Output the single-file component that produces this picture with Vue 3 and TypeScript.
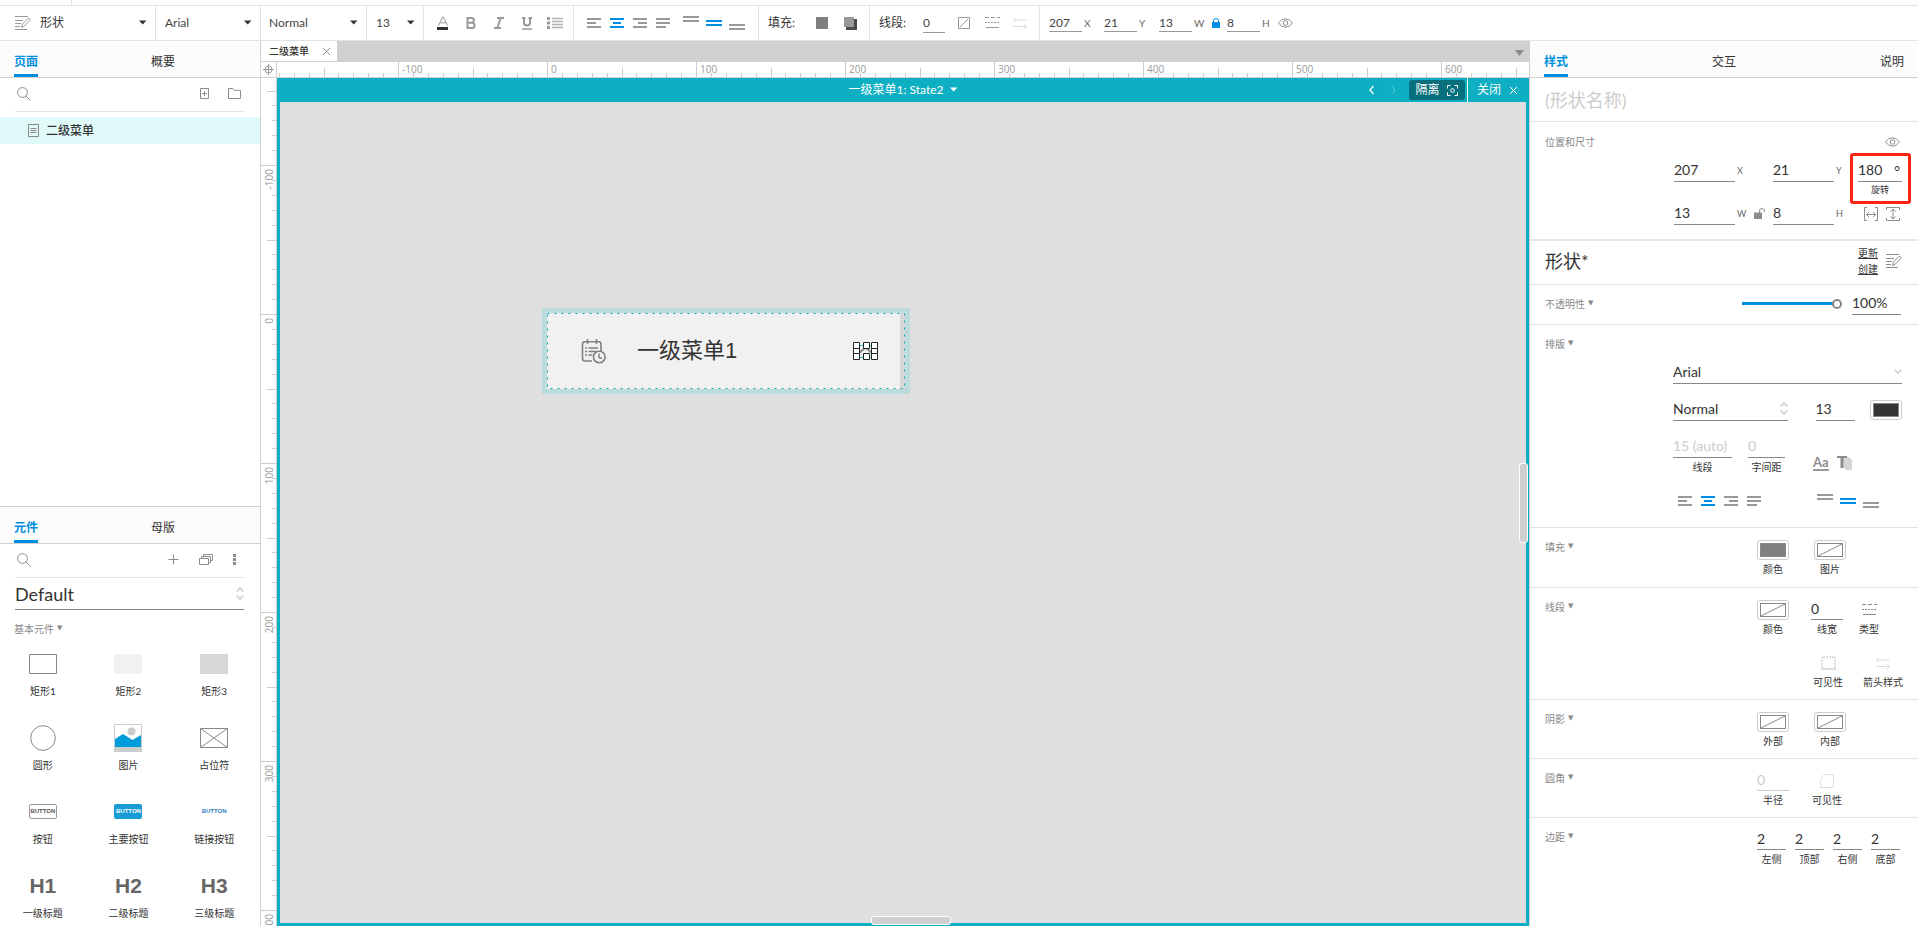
<script setup lang="ts">
import { computed, h, onBeforeUnmount, onMounted, ref, type FunctionalComponent } from 'vue'

interface Glyph { w: number; h: number; body: string }

const line = (d: string, width = 1, color = 'currentColor') =>
  `<path d="${d}" fill="none" stroke="${color}" stroke-width="${width}"/>`
const solid = (d: string) => `<path d="${d}" fill="currentColor"/>`

const glyphs: Record<string, Glyph> = {
  caret: { w: 8, h: 5, body: solid('M0 0.5h7.4L3.7 4.6z') },
  menu: { w: 9, h: 6, body: solid('M0 0h9L4.5 6z') },
  style: { w: 16, h: 14, body: line('M0 0.5h13M0 4.5h8M0 7.5h6M0 10.5h5M0 13.5h12') + line('M6.5 11.5l1-3.6 5-5q1-1 2-.2t0 2l-5 5.2z') },
  fontColor: { w: 12, h: 14, body: line('M1.5 9.5L5.6 1h.8l4.1 8.5M3 6.8h6') + '<path d="M0 11h11v3H0z" fill="#333"/>' },
  bold: { w: 10, h: 12, body: line('M1.5 1h4a2.3 2.3 0 0 1 0 4.8h-4zM1.5 5.8h4.4a2.5 2.5 0 0 1 0 5.2H1.5z', 2) },
  italic: { w: 10, h: 12, body: line('M3 1h7M0 11h7M6.5 1L3.5 11', 2) },
  underline: { w: 10, h: 13, body: line('M0 1h3.5M6.5 1H10M2 1v4.5a3 3 0 0 0 6 0V1', 2) + line('M0 12h10', 1.5) },
  list: { w: 16, h: 12, body: solid('M0 0h3v3H0zM0 4.5h3v3H0zM0 9h3v3H0z') + '<path d="M5 1.5h11M5 4.5h11M5 7.5h11M5 10.5h11" stroke="currentColor" stroke-width="1.5" opacity=".75"/>' },
  alignLeft: { w: 14, h: 10, body: solid('M0 0h14v2H0zM0 4h9v2H0zM0 8h14v2H0z') },
  alignCenter: { w: 14, h: 10, body: solid('M0 0h14v2H0zM3 4h8v2H3zM0 8h14v2H0z') },
  alignRight: { w: 14, h: 10, body: solid('M0 0h14v2H0zM5 4h9v2H5zM0 8h14v2H0z') },
  justify: { w: 14, h: 10, body: solid('M0 0h14v2H0zM0 4h14v2H0zM0 8h10v2H0z') },
  vTop: { w: 16, h: 14, body: solid('M0 0h16v2H0zM0 4h16v2H0z') },
  vMiddle: { w: 16, h: 14, body: solid('M0 4h16v2H0zM0 8h16v2H0z') },
  vBottom: { w: 16, h: 14, body: solid('M0 8h16v2H0zM0 12h16v2H0z') },
  fill: { w: 12, h: 12, body: '<path d="M0 0h12v12H0z" fill="#7f7f7f"/>' },
  shadow: { w: 13, h: 13, body: '<path d="M2 2h11v11H2z" fill="#4a4a4a"/><path d="M0 0h10v10H0z" fill="#999"/>' },
  noLine: { w: 12, h: 12, body: line('M.5 .5h11v11H.5zM2 10l8-8') },
  lineType: { w: 15, h: 12, body: line('M0 .5h4M6 .5h4M12 .5h3M0 5.5h2M3 5.5h2M6 5.5h2M9 5.5h2M12 5.5h2M1 10.5h13') },
  arrows: { w: 14, h: 12, body: line('M.5 3h13M3 .5L.5 3 3 5.5M0 9.5h13M11 7l2.5 2.5L11 12') },
  lock: { w: 8, h: 10, body: solid('M0 4h8v6H0z') + line('M1.5 4.5V3a2.5 2.5 0 0 1 5 0v1.5') },
  unlock: { w: 11, h: 12, body: solid('M0 4.5h8v6.5H0z') + line('M5.5 5V3a2.4 2.4 0 0 1 4.9 0v1') },
  eye: { w: 15, h: 10, body: line('M.5 5Q3.5 .8 7.5 .8T14.5 5Q11.5 9.2 7.5 9.2T.5 5z') + '<circle cx="7.5" cy="5" r="2.3" fill="none" stroke="currentColor"/>' },
  search: { w: 14, h: 14, body: '<circle cx="5.5" cy="5.5" r="4.9" fill="none" stroke="currentColor"/>' + line('M9 9l4.5 4.5') },
  addPage: { w: 9, h: 11, body: line('M.5 .5h8v10h-8zM2 5.5h5M4.5 3v5') },
  folder: { w: 13, h: 11, body: line('M.5 10.5V.5h4.2l1.5 1.8h6.3v8.2z') },
  page: { w: 11, h: 13, body: line('M.5 .5h10v12H.5zM2.5 4.5h6M2.5 6.5h6M2.5 8.5h6') },
  plus: { w: 11, h: 11, body: line('M5.5 .5v10M.5 5.5h10') },
  stack: { w: 14, h: 11, body: line('M.5 4.5h9v6h-9zM2.5 4.5v-2h9v6h-2M4.5 2.5v-2h9v6h-2') },
  more: { w: 3, h: 11, body: solid('M0 0h3v3H0zM0 4h3v3H0zM0 8h3v3H0z') },
  updown: { w: 8, h: 13, body: line('M.7 4.5L4 1l3.3 3.5M.7 8.5L4 12l3.3-3.5', 1.5) },
  down: { w: 8, h: 5, body: line('M.7 .8L4 4 7.3 .8', 1.5) },
  target: { w: 11, h: 11, body: '<circle cx="5.5" cy="5.5" r="3.5" fill="none" stroke="currentColor"/>' + line('M5.5 0v11M0 5.5h11') },
  close: { w: 9, h: 9, body: line('M1 1l7 7M8 1L1 8') },
  prev: { w: 6, h: 10, body: line('M4.5 1L1 5l3.5 4', 1.3) },
  next: { w: 6, h: 10, body: line('M1.5 1L5 5 1.5 9') },
  isolate: { w: 11, h: 11, body: line('M3.5 .5h-3v3M7.5 .5h3v3M.5 7.5v3h3M10.5 7.5v3h-3') + '<circle cx="5.5" cy="5.5" r="1.8" fill="none" stroke="currentColor"/>' },
  fitWidth: { w: 14, h: 14, body: line('M3 .5H.5v13H3M11 .5h2.5v13H11M2 7.5h10M5 5L2.5 7.5 5 10M9 5l2.5 2.5L9 10') },
  fitHeight: { w: 14, h: 14, body: line('M.5 3V.5h13V3M.5 11v2.5h13V11M7 2v10M4.5 4.5L7 2l2.5 2.5M4.5 9.5L7 12l2.5-2.5') },
  textShadow: { w: 15, h: 14, body: '<path d="M6 1h6l3 3v10H9l-2-2z" fill="#d5d5d5"/>' + solid('M0 0h10v2H6.5v10H3.5V2H0z') },
  borders: { w: 15, h: 14, body: '<path d="M1 12V1h13v11" fill="none" stroke="currentColor" stroke-width="2" stroke-dasharray="2 1"/>' + solid('M0 12h15v2H0z') },
  corner: { w: 14, h: 14, body: line('M.5 13.5V8Q.5 .5 8 .5h5.5v13z') },
  rect: { w: 28, h: 20, body: line('M.5 .5h27v19H.5z') },
  rectLight: { w: 28, h: 20, body: '<path d="M0 0h28v20H0z" fill="#f2f2f2"/>' },
  rectDark: { w: 28, h: 20, body: '<path d="M0 0h28v20H0z" fill="#d7d7d7"/>' },
  circle: { w: 26, h: 26, body: '<circle cx="13" cy="13" r="12.3" fill="none" stroke="currentColor"/>' },
  image: { w: 28, h: 28, body: '<path d="M0 0h28v28H0z" fill="#ccc"/><path d="M1 1h26v22H1z" fill="#fff"/><circle cx="17.5" cy="7.5" r="4" fill="#ccc"/><path d="M1 15l8-5 9.5 6 8.5-5v12H1z" fill="#009ddc"/>' },
  placeholder: { w: 28, h: 20, body: line('M.5 .5h27v19H.5zM.5 .5l27 19M27.5 .5l-27 19') },
  schedule: {
    w: 25, h: 25,
    body: '<path d="M11 22H4q-2.5 0-2.5-2.5V5Q1.5 2.7 4 2.7h14q2 0 2 2.3v7" fill="none" stroke="currentColor" stroke-width="1.6"/>' +
      line('M6.5 0v5M15.5 0v5M7.5 9h9.5M7.5 12.5h8M7.5 16h4', 1.5) + solid('M4 8.3h2v1.5H4zM4 11.8h2v1.5H4zM4 15.3h2v1.5H4z') +
      '<circle cx="18.3" cy="18" r="5.8" fill="none" stroke="currentColor" stroke-width="1.6"/>' + line('M18 14.5v4l3 1', 1.5),
  },
  selection: {
    w: 25, h: 18,
    body: line('M4 3.5h17v12H4z', 1, '#18c8cc') + line('M6 11l6.5-5.5L19 11', 2, '#888') +
      '<g fill="#fff" stroke="#222"><path d="M.5 .5h6v6h-6zM.5 6.5h6v5h-6zM.5 11.5h6v6h-6zM10.5 .5h6v6h-6zM10.5 11.5h6v6h-6zM18.5 .5h6v6h-6zM18.5 6.5h6v5h-6zM18.5 11.5h6v6h-6z"/></g>',
  },
}

const Icon: FunctionalComponent<{ name: string }> = (props) => {
  const g = glyphs[props.name]
  return h('svg', { width: g.w, height: g.h, viewBox: `0 0 ${g.w} ${g.h}`, 'aria-hidden': 'true', innerHTML: g.body })
}
Icon.props = ['name']

const textTools = [
  ['fontColor', '文字颜色'], ['bold', '粗体'], ['italic', '斜体'], ['underline', '下划线'], ['list', '项目符号'],
]
const hAligns = [
  ['alignLeft', '左对齐'], ['alignCenter', '居中'], ['alignRight', '右对齐'], ['justify', '两端对齐'],
]
const vAligns = [
  ['vTop', '顶部对齐'], ['vMiddle', '垂直居中'], ['vBottom', '底部对齐'],
]
const hAlign = ref('alignCenter')
const vAlign = ref('vMiddle')

const x = ref('207')
const y = ref('21')
const w = ref('13')
const ht = ref('8')
const size = ref('13')
const rotation = ref('180')
const opacity = ref(100)
const lineWidth = ref('0')
const paddings = ref([
  { label: '左侧', value: '2' }, { label: '顶部', value: '2' }, { label: '右侧', value: '2' }, { label: '底部', value: '2' },
])

interface Widget { label: string; icon?: string; button?: string; heading?: string }
const widgets: Widget[] = [
  { label: '矩形1', icon: 'rect' }, { label: '矩形2', icon: 'rectLight' }, { label: '矩形3', icon: 'rectDark' },
  { label: '圆形', icon: 'circle' }, { label: '图片', icon: 'image' }, { label: '占位符', icon: 'placeholder' },
  { label: '按钮', button: 'plain' }, { label: '主要按钮', button: 'primary' }, { label: '链接按钮', button: 'link' },
  { label: '一级标题', heading: 'H1' }, { label: '二级标题', heading: 'H2' }, { label: '三级标题', heading: 'H3' },
]

/* Ruler marks: one every 10 units at 149% zoom, as far as the frame reaches. */
const frame = ref<HTMLElement | null>(null)
const frameWidth = ref(0)
const frameHeight = ref(0)
const marks = (origin: number, length: number) => {
  const first = Math.ceil(-origin / 14.9)
  const last = Math.floor((length - 2) / 14.9 - origin / 14.9)
  return Array.from({ length: Math.max(0, last - first + 1) }, (_, i) => {
    const k = first + i
    return { pos: Math.round(origin + k * 14.9), label: k % 10 === 0 ? String(k * 10) : '', start: k % 10 === 0 ? 0 : k % 5 === 0 ? 6 : 11 }
  })
}
const hMarks = computed(() => marks(270, frameWidth.value))
const vMarks = computed(() => marks(236, frameHeight.value))

const measure = () => {
  frameWidth.value = frame.value?.offsetWidth ?? 0
  frameHeight.value = frame.value?.offsetHeight ?? 0
}
onMounted(() => {
  measure()
  window.addEventListener('resize', measure)
})
onBeforeUnmount(() => window.removeEventListener('resize', measure))
</script>

<template>
  <div class="app">
    <div class="menu-edge"><span></span></div>
    <header class="toolbar">
      <div class="group g-style">
        <Icon name="style" />
        <label class="pick"><select aria-label="样式"><option>形状</option></select><Icon name="caret" class="pick-caret" /></label>
      </div>
      <div class="group g-font"><label class="pick"><select aria-label="字体"><option>Arial</option></select><Icon name="caret" class="pick-caret" /></label></div>
      <div class="group g-weight"><label class="pick"><select aria-label="字形"><option>Normal</option></select><Icon name="caret" class="pick-caret" /></label></div>
      <div class="group g-size"><label class="pick"><select aria-label="字号"><option>13</option></select><Icon name="caret" class="pick-caret" /></label></div>
      <div class="group g-text">
        <button v-for="[n, t] in textTools" :key="n" class="tool" :aria-label="t"><Icon :name="n" /></button>
      </div>
      <div class="group g-align">
        <button v-for="[n, t] in hAligns" :key="n" class="align" :class="{ on: hAlign === n }" :aria-label="t" @click="hAlign = n"><Icon :name="n" /></button>
        <span class="split"></span>
        <button v-for="[n, t] in vAligns" :key="n" class="align" :class="{ on: vAlign === n }" :aria-label="t" @click="vAlign = n"><Icon :name="n" /></button>
      </div>
      <div class="group g-fill">
        <span class="caption">填充:</span>
        <button class="tool" aria-label="填充颜色"><Icon name="fill" /></button>
        <button class="tool" aria-label="阴影"><Icon name="shadow" /></button>
      </div>
      <div class="group g-line">
        <label class="caption" for="tb-line">线段:</label>
        <input id="tb-line" v-model="lineWidth" class="mini narrow">
        <span class="split"></span>
        <button class="tool" aria-label="线段颜色"><Icon name="noLine" /></button>
        <button class="tool" aria-label="线段类型"><Icon name="lineType" /></button>
        <button class="tool faint" aria-label="箭头样式" disabled><Icon name="arrows" /></button>
      </div>
      <div class="group g-pos">
        <input id="tb-x" v-model="x" class="mini"><label class="axis" for="tb-x">X</label>
        <input id="tb-y" v-model="y" class="mini"><label class="axis" for="tb-y">Y</label>
        <input id="tb-w" v-model="w" class="mini"><label class="axis short" for="tb-w">W</label>
        <button class="lock" aria-label="锁定比例"><Icon name="lock" /></button>
        <input id="tb-h" v-model="ht" class="mini"><label class="axis" for="tb-h">H</label>
        <button class="bare" aria-label="可见"><Icon name="eye" /></button>
      </div>
    </header>

    <main class="work">
      <aside class="left">
        <section class="pages">
          <nav class="tabs"><button class="tab active">页面</button><button class="tab">概要</button></nav>
          <div class="finder">
            <button class="bare" aria-label="搜索页面"><Icon name="search" /></button>
            <span class="finder-tools p-tools">
              <button class="bare" aria-label="添加页面"><Icon name="addPage" /></button>
              <button class="bare" aria-label="添加文件夹"><Icon name="folder" /></button>
            </span>
          </div>
          <a class="page-row" href="#page"><Icon name="page" />二级菜单</a>
        </section>
        <section class="library">
          <nav class="tabs"><button class="tab active">元件</button><button class="tab">母版</button></nav>
          <div class="finder">
            <button class="bare" aria-label="搜索元件"><Icon name="search" /></button>
            <span class="finder-tools l-tools">
              <button class="bare" aria-label="添加元件库"><Icon name="plus" /></button>
              <button class="bare" aria-label="元件库"><Icon name="stack" /></button>
              <button class="bare" aria-label="更多"><Icon name="more" /></button>
            </span>
          </div>
          <label class="pick lib-pick"><select aria-label="元件库选择"><option>Default</option></select><Icon name="updown" class="pick-arrow" /></label>
          <button class="lib-title">基本元件<span class="tri">▼</span></button>
          <ul class="widgets">
            <li v-for="item in widgets" :key="item.label">
              <span class="thumb">
                <Icon v-if="item.icon" :name="item.icon" />
                <span v-else-if="item.button" class="sample" :class="item.button">BUTTON</span>
                <b v-else>{{ item.heading }}</b>
              </span>
              <span class="w-label">{{ item.label }}</span>
            </li>
          </ul>
        </section>
      </aside>

      <section class="canvas">
        <div class="files">
          <div class="file">二级菜单<button class="bare" aria-label="关闭标签"><Icon name="close" /></button></div>
          <button class="bare files-menu" aria-label="标签列表"><Icon name="menu" /></button>
        </div>
        <div class="ruler-h">
          <span class="origin"><Icon name="target" /></span>
          <svg class="scale-h" aria-hidden="true">
            <g v-for="m in hMarks" :key="m.pos">
              <rect :x="m.pos" :y="m.start" width="1" :height="15 - m.start" />
              <text v-if="m.label" :x="m.pos + 4" y="11">{{ m.label }}</text>
            </g>
          </svg>
        </div>
        <div class="below">
          <svg class="scale-v" aria-hidden="true">
            <g v-for="m in vMarks" :key="m.pos">
              <rect :x="m.start" :y="m.pos" :width="15 - m.start" height="1" />
              <text v-if="m.label" text-anchor="end" :transform="`translate(12 ${m.pos + 4}) rotate(-90)`">{{ m.label }}</text>
            </g>
          </svg>
          <div ref="frame" class="frame">
            <div class="state-bar">
              <span></span>
              <button class="state">一级菜单1: State2<Icon name="caret" /></button>
              <span class="state-tools">
                <button class="bare" aria-label="上一个状态"><Icon name="prev" /></button>
                <button class="bare dim" aria-label="下一个状态"><Icon name="next" /></button>
                <button class="isolate">隔离<Icon name="isolate" /></button>
                <button class="shut">关闭<Icon name="close" /></button>
              </span>
            </div>
            <div class="stage">
              <div class="halo">
                <div class="item">
                  <Icon name="schedule" class="item-icon" />
                  <span class="item-text">一级菜单1</span>
                  <Icon name="selection" class="item-arrow" />
                </div>
                <svg class="dots" aria-hidden="true"><rect x="0.5" y="0.5" width="357" height="75" /></svg>
              </div>
            </div>
            <span class="bar-v"></span>
            <span class="bar-h"></span>
          </div>
        </div>
      </section>

      <aside class="right">
        <nav class="tabs spread"><button class="tab active">样式</button><button class="tab">交互</button><button class="tab">说明</button></nav>
        <input class="name" placeholder="(形状名称)" aria-label="形状名称">

        <section class="place">
          <div class="place-head"><h2>位置和尺寸</h2><button class="bare" aria-label="可见性"><Icon name="eye" /></button></div>
          <div class="place-grid">
            <input id="px" v-model="x"><label for="px" class="unit">X</label>
            <input id="py" v-model="y"><label for="py" class="unit">Y</label>
            <div class="rotate"><input id="pr" v-model="rotation"><span class="deg">°</span><label for="pr">旋转</label><span class="ring"></span></div>
            <input id="pw" v-model="w"><span class="unit"><label for="pw">W</label><button class="bare" aria-label="锁定宽高比"><Icon name="unlock" /></button></span>
            <input id="ph" v-model="ht"><label for="ph" class="unit">H</label>
            <span class="fits"><button class="bare" aria-label="适应宽度"><Icon name="fitWidth" /></button><button class="bare" aria-label="适应高度"><Icon name="fitHeight" /></button></span>
          </div>
        </section>

        <section class="shape">
          <h1>形状*</h1>
          <span class="links"><a href="#update">更新</a><a href="#create">创建</a></span>
          <button class="bare" aria-label="管理样式"><Icon name="style" /></button>
        </section>

        <section class="opacity">
          <h2>不透明性<span class="tri">▼</span></h2>
          <input v-model.number="opacity" type="range" min="0" max="100" aria-label="不透明性">
          <input class="percent" :value="opacity + '%'" aria-label="不透明性数值">
        </section>

        <section class="block type">
          <h2>排版<span class="tri">▼</span></h2>
          <div class="type-rows">
            <label class="pick line-pick"><select aria-label="字体名称"><option>Arial</option></select><Icon name="down" class="pick-arrow" /></label>
            <div class="trow">
              <label class="pick line-pick weight"><select aria-label="字重"><option>Normal</option></select><Icon name="updown" class="pick-arrow" /></label>
              <input v-model="size" class="in39" aria-label="文字大小">
              <button class="swatch" aria-label="文字颜色选择"><span class="chip dark"></span></button>
            </div>
            <div class="trow third">
              <div class="field in59"><input id="lh" placeholder="15 (auto)"><label for="lh">线段</label></div>
              <div class="field in37"><input id="ls" placeholder="0"><label for="ls">字间距</label></div>
              <span class="cases"><button class="bare aa" aria-label="大小写">Aa</button><button class="bare" aria-label="文字阴影"><Icon name="textShadow" /></button></span>
            </div>
            <div class="trow aligns">
              <span><button v-for="[n, t] in hAligns" :key="n" class="align" :class="{ on: hAlign === n }" :aria-label="t" @click="hAlign = n"><Icon :name="n" /></button></span>
              <span><button v-for="[n, t] in vAligns" :key="n" class="align" :class="{ on: vAlign === n }" :aria-label="t" @click="vAlign = n"><Icon :name="n" /></button></span>
            </div>
          </div>
        </section>

        <section class="block fill">
          <h2>填充<span class="tri">▼</span></h2>
          <div class="controls wide-gap">
            <div class="field"><button id="fc" class="swatch"><span class="chip grey"></span></button><label for="fc">颜色</label></div>
            <div class="field"><button id="fi" class="swatch"><span class="chip none"><svg viewBox="0 0 24 12"><path d="M0 12L24 0" /></svg></span></button><label for="fi">图片</label></div>
          </div>
        </section>

        <section class="block">
          <h2>线段<span class="tri">▼</span></h2>
          <div class="controls stacked">
            <div class="crow">
              <div class="field"><button id="lc" class="swatch"><span class="chip none"><svg viewBox="0 0 24 12"><path d="M0 12L24 0" /></svg></span></button><label for="lc">颜色</label></div>
              <div class="field after22"><input id="lw" v-model="lineWidth"><label for="lw">线宽</label></div>
              <div class="field after10"><button id="lt" class="ico"><Icon name="lineType" /></button><label for="lt">类型</label></div>
            </div>
            <div class="crow second">
              <div class="field"><button id="lv" class="ico faint" disabled><Icon name="borders" /></button><label for="lv">可见性</label></div>
              <div class="field"><button id="la" class="ico faint" disabled><Icon name="arrows" /></button><label for="la">箭头样式</label></div>
            </div>
          </div>
        </section>

        <section class="block">
          <h2>阴影<span class="tri">▼</span></h2>
          <div class="controls wide-gap">
            <div class="field"><button id="so" class="swatch"><span class="chip none"><svg viewBox="0 0 24 12"><path d="M0 12L24 0" /></svg></span></button><label for="so">外部</label></div>
            <div class="field"><button id="si" class="swatch"><span class="chip none"><svg viewBox="0 0 24 12"><path d="M0 12L24 0" /></svg></span></button><label for="si">内部</label></div>
          </div>
        </section>

        <section class="block">
          <h2>圆角<span class="tri">▼</span></h2>
          <div class="controls">
            <div class="field"><input id="rr" class="off" placeholder="0"><label for="rr">半径</label></div>
            <div class="field after22"><button id="rv" class="ico faint" disabled><Icon name="corner" /></button><label for="rv">可见性</label></div>
          </div>
        </section>

        <section class="block last">
          <h2>边距<span class="tri">▼</span></h2>
          <div class="controls pads">
            <div v-for="(p, i) in paddings" :key="p.label" class="field in29"><input :id="'pad' + i" v-model="p.value"><label :for="'pad' + i">{{ p.label }}</label></div>
          </div>
        </section>
      </aside>
    </main>
  </div>
</template>

<style>
body { margin: 0; overflow: hidden; }
</style>

<style scoped>
.app { display: flex; flex-direction: column; height: 100vh; overflow: hidden; background: #fff; color: #333; font: 12px/16px Lato, "Noto Sans CJK SC", sans-serif; }
.app *, .app *::before { box-sizing: border-box; }
button, input, select { font: inherit; color: inherit; margin: 0; padding: 0; border: 0; border-radius: 0; background: none; min-width: 0; outline: 0; }
button { display: inline-flex; align-items: center; justify-content: center; cursor: pointer; }
select { appearance: none; width: 100%; }
svg { display: block; flex: none; }
h1, h2 { margin: 0; font-weight: 400; }
.bare { color: #8c8c8c; }
.faint { color: #ddd; }
.split { width: 5px; }
.tri { display: inline-block; height: 20px; margin-left: 3px; font: 7px/18px "DejaVu Sans", sans-serif; vertical-align: top; }

.menu-edge { height: 5px; flex: none; }
.menu-edge span { display: block; width: 72px; height: 5px; border-right: 1px solid #e3e3e3; }
.toolbar { display: flex; height: 36px; flex: none; border-top: 1px solid #e3e3e3; border-bottom: 1px solid #e3e3e3; }
.group { display: flex; align-items: center; padding-bottom: 1px; border-right: 1px solid #e3e3e3; color: #444; }
.group:last-child { flex: 1; border-right: 0; }
.g-style { width: 156px; padding: 0 8px 1px 15px; gap: 9px; color: #999; }
.g-style .pick { color: #333; }
.g-font { width: 105px; padding: 0 8px 1px 9px; }
.g-weight { width: 106px; padding: 0 8px 1px; }
.g-size { width: 57px; padding: 0 8px 1px 9px; }
.g-text { padding: 0 4px 0 5px; }
.g-align { padding: 0 10px 0 8px; }
.g-fill, .g-line { padding: 0 5px 0 9px; }
.g-pos { padding-left: 9px; }
.pick { display: grid; align-items: center; flex: 1; }
.pick > * { grid-area: 1 / 1; }
.pick-caret, .pick-arrow { justify-self: end; pointer-events: none; }
.pick-caret { color: #333; }
.pick-arrow { color: #ccc; }
.tool { width: 28px; height: 24px; color: #999; }
.tool.faint { color: #ddd; }
.align { width: 23px; height: 22px; color: #999; }
.align.on { color: #008fe0; }
.caption { width: 40px; color: #333; }
.g-line .caption { width: 44px; }
.mini { width: 33px; height: 19px; border-bottom: 1px solid #999; }
.mini.narrow { width: 22px; }
.axis { width: 22px; padding-left: 2px; font-size: 10px; color: #666; }
.axis.short { width: 13px; }
.lock { width: 22px; color: #008fe0; }
.g-pos .axis:nth-last-child(2) { width: 18px; }

.work { display: flex; flex: 1; min-height: 0; }
.left { display: flex; flex-direction: column; width: 261px; flex: none; border-right: 1px solid #d0d0d0; }
.tabs { display: grid; grid-template-columns: 137px 1fr; justify-items: start; height: 37px; padding: 0 14px; background: #fcfcfc; border-bottom: 1px solid #d0d0d0; }
.tabs.spread { display: flex; justify-content: space-between; }
.tab { height: 36px; padding-top: 8px; border-bottom: 3px solid transparent; }
.tab.active { color: #008fe0; border-color: #008fe0; font-weight: 700; }
.pages { flex: 1; min-height: 0; }
.finder { display: flex; align-items: center; justify-content: space-between; height: 34px; margin: 0 15px; padding: 0 4px 2px 2px; border-bottom: 1px solid #e3e3e3; }
.finder-tools { display: flex; align-items: center; }
.p-tools { gap: 19px; }
.l-tools { gap: 20px; padding-right: 5px; }
.page-row { display: flex; align-items: center; gap: 7px; height: 27px; margin-top: 5px; padding-left: 28px; background: #e0fafa; color: #333; text-decoration: none; font-weight: 500; }
.page-row svg { color: #888; }
.library { height: 420px; flex: none; overflow: hidden; border-top: 1px solid #d0d0d0; }
.lib-pick { height: 32px; margin: 0 16px 0 15px; border-bottom: 1px solid #888; font-size: 18px; line-height: 24px; }
.lib-title { margin: 9px 0 5px 14px; font-size: 10px; line-height: 20px; color: #888; }
.widgets { display: grid; grid-template-columns: repeat(3, 1fr); row-gap: 19px; list-style: none; margin: 0; padding: 0 3px 0 0; }
.widgets li { display: flex; flex-direction: column; align-items: center; }
.thumb { display: flex; align-items: center; height: 39px; color: #888; }
.thumb b { font: 700 21px/24px "Liberation Sans", sans-serif; color: #666; }
.w-label { font-size: 10px; line-height: 16px; }
.sample { width: 28px; height: 15px; border-radius: 2px; font: 700 6px/13px "Liberation Sans", sans-serif; text-align: center; border: 1px solid transparent; color: #555; }
.sample.plain { border-color: #999; }
.sample.primary { background: #169bd5; color: #fff; }
.sample.link { color: #337dc0; }

.canvas { display: flex; flex-direction: column; flex: 1; min-width: 0; }
.files { display: flex; justify-content: space-between; height: 21px; flex: none; background: #d0d0d0; }
.file { display: flex; align-items: center; justify-content: space-between; width: 76px; height: 20px; padding: 0 6px 0 8px; background: #fff; font-size: 10px; font-weight: 500; }
.files-menu { padding: 3px 5px 0 0; }
.ruler-h { display: flex; height: 16px; flex: none; border-bottom: 1px solid #d0d0d0; }
.origin { display: flex; align-items: center; justify-content: center; width: 16px; flex: none; border-right: 1px solid #d0d0d0; color: #999; }
.scale-h { flex: 1; min-width: 0; height: 15px; overflow: hidden; }
.scale-h rect, .scale-v rect { fill: #ccc; }
.scale-h text, .scale-v text { font: 10px "Open Sans", sans-serif; fill: #999; }
.below { display: flex; flex: 1; min-height: 0; }
.scale-v { width: 16px; height: 100%; overflow: hidden; border-right: 1px solid #d0d0d0; }
.frame { position: relative; display: flex; flex-direction: column; flex: 1; min-width: 0; background: #0eafc2; padding: 0 3px 3px; }
.state-bar { display: grid; grid-template-columns: 1fr auto 1fr; align-items: center; height: 24px; flex: none; color: #fff; }
.state { gap: 6px; padding-bottom: 1px; }
.state-tools { display: flex; align-items: center; justify-content: flex-end; height: 24px; }
.state-tools .bare { width: 21px; color: #fff; }
.state-tools .dim { color: #5cc9d5; }
.isolate { width: 56px; height: 20px; margin: 0 2px 0 5px; gap: 8px; border-radius: 3px; background: #08707c; }
.shut { height: 24px; padding: 0 8px 0 9px; gap: 8px; border-left: 1px solid #fff; }
.stage { position: relative; flex: 1; min-height: 0; background: #dfdfdf; }
.halo { position: absolute; left: 262px; top: 206px; width: 368px; height: 86px; padding: 5px; background: #bcdbdb; }
.item { display: flex; align-items: center; width: 358px; height: 76px; padding: 0 22px 0 34px; background: #f1f1f1; border-right: 5px solid #d8d8d8; }
.item-icon { color: #808080; }
.item-text { flex: 1; padding-left: 31px; font: 22px/30px "Liberation Sans", "Noto Sans CJK SC", sans-serif; }
.dots { position: absolute; left: 5px; top: 5px; width: 358px; height: 76px; }
.dots rect { fill: none; stroke: #0ea5b5; stroke-dasharray: 2 5; }
.bar-v, .bar-h { position: absolute; border: 1px solid #fff; border-radius: 3px; background: #d0d0d0; }
.bar-v { right: 1px; top: 385px; width: 9px; height: 80px; }
.bar-h { left: 594px; bottom: 1px; width: 80px; height: 9px; }

.right { width: 389px; flex: none; border-left: 1px solid #d0d0d0; }
.right input:not([type="range"]) { width: 100%; height: 22px; padding-bottom: 2px; border-bottom: 1px solid #888; font-size: 14px; }
.right input::placeholder { color: #ccc; opacity: 1; }
.right input.name { display: block; height: 44px; padding: 0 15px; border-bottom: 1px solid #e3e3e3; font-size: 18px; }
h2 { font-size: 10px; line-height: 20px; color: #888; }
.right label { font-size: 10px; line-height: 18px; white-space: nowrap; }
.place { height: 119px; padding: 10px 16px 0 15px; border-bottom: 2px solid #e6e6e6; }
.place-head { display: flex; justify-content: space-between; align-items: center; padding-right: 2px; }
.place-grid { display: grid; grid-template-columns: 61px 38px 61px 24px 44px; grid-template-rows: 43px 22px; justify-content: end; margin-top: 8px; }
.right .unit { display: flex; align-items: center; height: 22px; padding-left: 2px; font-size: 9px; color: #666; gap: 8px; }
.right .unit label { font-size: 9px; }
.rotate { position: relative; text-align: center; }
.right .rotate label { display: block; font-size: 9px; line-height: 16px; }
.deg { position: absolute; right: 2px; top: 3px; font-size: 14px; }
.ring { position: absolute; left: -8px; top: -7px; width: 61px; height: 51px; border: 3px solid #fe2312; border-radius: 3px; pointer-events: none; }
.fits { display: flex; align-items: center; justify-content: flex-end; gap: 8px; padding-right: 2px; }
.shape { display: flex; align-items: center; height: 44px; padding: 0 16px 3px 15px; border-bottom: 1px solid #e3e3e3; }
h1 { flex: 1; font-size: 18px; line-height: 24px; }
.links { display: flex; flex-direction: column; margin-right: 8px; font-size: 10px; line-height: 16px; }
.links a { color: #333; }
.opacity { display: flex; align-items: center; height: 40px; padding: 0 17px 2px 15px; border-bottom: 1px solid #e3e3e3; }
.opacity h2 { flex: 1; }
input[type="range"] { appearance: none; width: 100px; height: 12px; margin-right: 10px; background: linear-gradient(#008fe0, #008fe0) 0 center / 92% 3px no-repeat; }
input[type="range"]::-webkit-slider-thumb { appearance: none; box-sizing: border-box; width: 10px; height: 10px; border: 2px solid #888; border-radius: 50%; background: #fff; }
.right input.percent { width: 49px; }
.block { display: flex; justify-content: space-between; padding: 9px 16px 8px 15px; border-bottom: 1px solid #e3e3e3; }
.block.fill { padding-bottom: 9px; }
.block.last { border-bottom: 0; }
.type { padding-bottom: 15px; }
.type-rows { display: flex; flex-direction: column; gap: 15px; width: 229px; padding-top: 28px; }
.line-pick { height: 22px; flex: none; padding-bottom: 2px; border-bottom: 1px solid #888; }
.line-pick select { font-size: 14px; }
.right .line-pick.weight { width: 115px; }
.trow { display: flex; justify-content: space-between; align-items: center; height: 22px; }
.trow .in39 { width: 39px !important; margin-left: 12px; }
.trow.third { height: 40px; justify-content: flex-start; align-items: flex-start; gap: 16px; }
.cases { display: flex; align-items: center; gap: 8px; margin: 19px 0 0 12px; }
.aa { height: 16px; border-bottom: 2px solid #999; font-size: 13px; font-weight: 700; }
.aligns { margin-top: -1px; padding-right: 20px; }
.aligns span { display: flex; }
.controls { display: flex; width: 145px; padding-top: 3px; }
.wide-gap { gap: 25px; }
.stacked { flex-direction: column; gap: 15px; }
.crow { display: flex; }
.second { padding-left: 55px; gap: 23px; }
.pads { gap: 9px; }
.field { display: flex; flex-direction: column; align-items: center; width: 32px; }
.right .controls .field input { height: 20px; }
.right .controls .field input.off { border-color: #ccc; }
.in59 { width: 59px; }
.in37 { width: 37px; }
.in29 { width: 29px; }
.after22 { margin-left: 22px; }
.after10 { margin-left: 10px; }
.ico { height: 20px; color: #888; }
.ico.faint { color: #ddd; }
.swatch { width: 32px; height: 20px; border: 1px solid #ccc; border-radius: 3px; }
.chip { width: 26px; height: 14px; border: 1px solid #888; }
.chip.dark { background: #333; }
.chip.grey { background: #7f7f7f; }
.chip svg { width: 24px; height: 12px; fill: none; stroke: #888; }
</style>
